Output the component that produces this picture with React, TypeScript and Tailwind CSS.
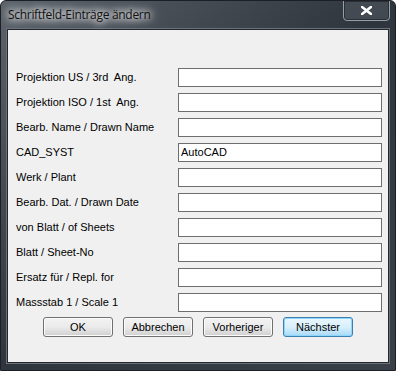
const rows: { label: string; value: string }[] = [
  { label: 'Projektion US / 3rd\u00a0 Ang.', value: '' },
  { label: 'Projektion ISO / 1st\u00a0 Ang.', value: '' },
  { label: 'Bearb. Name / Drawn Name', value: '' },
  { label: 'CAD_SYST', value: 'AutoCAD' },
  { label: 'Werk / Plant', value: '' },
  { label: 'Bearb. Dat. / Drawn Date', value: '' },
  { label: 'von Blatt / of Sheets', value: '' },
  { label: 'Blatt / Sheet-No', value: '' },
  { label: 'Ersatz für / Repl. for', value: '' },
  { label: 'Massstab 1 / Scale 1', value: '' },
]

function DialogButton({ label, primary }: { label: string; primary?: boolean }) {
  return (
    <button
      className={
        primary
          ? 'h-[20px] w-[70px] rounded-[3px] border border-[#3c7fb1] bg-gradient-to-b from-[#eaf6fd] via-[#d9f0fc] to-[#a7d9f5] text-[11px] text-black shadow-[inset_0_0_0_1px_#8fd6ff]'
          : 'h-[20px] w-[70px] rounded-[3px] border border-[#707070] bg-gradient-to-b from-[#f2f2f2] via-[#ebebeb] to-[#cfcfcf] text-[11px] text-black shadow-[inset_0_0_0_1px_#fcfcfc]'
      }
    >
      {label}
    </button>
  )
}

export default function App() {
  return (
    <div
      className="relative h-[371px] w-[396px] overflow-hidden rounded-t-[6px] border border-[#1c2026] bg-gradient-to-br from-[#5c636b] via-[#2f353d] to-[#3a4047]"
      style={{ fontFamily: '"Liberation Sans", Arial, sans-serif' }}
    >
      {/* Title bar */}
      <div className="flex h-[28px] items-center pl-[7px]">
        <span
          className="text-[12px] tracking-[-0.3px] text-[#111] [text-shadow:0_0_6px_#ffffff,0_0_10px_#ffffff,0_0_14px_#e8e8e8]"
          style={{ fontFamily: '"Open Sans", "Liberation Sans", sans-serif' }}
        >
          Schriftfeld-Einträge ändern
        </span>
      </div>

      {/* Close button */}
      <div className="absolute right-[5px] top-[-1px] flex h-[21px] w-[47px] items-center justify-center rounded-b-[4px] border border-[#9a9fa5] bg-[#4c535b]/70 shadow-[inset_0_0_0_1px_#2a2f35]">
        <svg width="11" height="9" viewBox="0 0 11 9">
          <path d="M1 1 L10 8 M10 1 L1 8" stroke="#ffffff" strokeWidth="2.6" strokeLinecap="square" />
        </svg>
      </div>

      {/* Client area */}
      <div className="mx-[6px] h-[334px] border border-[#22272d] bg-[#f0f0f0] shadow-[0_0_0_1px_#6b7178]">
        <div className="flex flex-col gap-[6px] pl-[8px] pr-[6px] pt-[38px]">
          {rows.map((row) => (
            <div key={row.label} className="flex h-[19px] items-center">
              <span className="w-[162px] text-[11px] text-black">{row.label}</span>
              <div className="flex h-[19px] w-[204px] items-center border border-[#6e6e6e] bg-white pl-[2px] text-[11px] text-black">
                {row.value}
              </div>
            </div>
          ))}
        </div>
        <div className="mt-[5px] flex gap-[10px] pl-[35px]">
          <DialogButton label="OK" />
          <DialogButton label="Abbrechen" />
          <DialogButton label="Vorheriger" />
          <DialogButton label="Nächster" primary />
        </div>
      </div>
    </div>
  )
}
